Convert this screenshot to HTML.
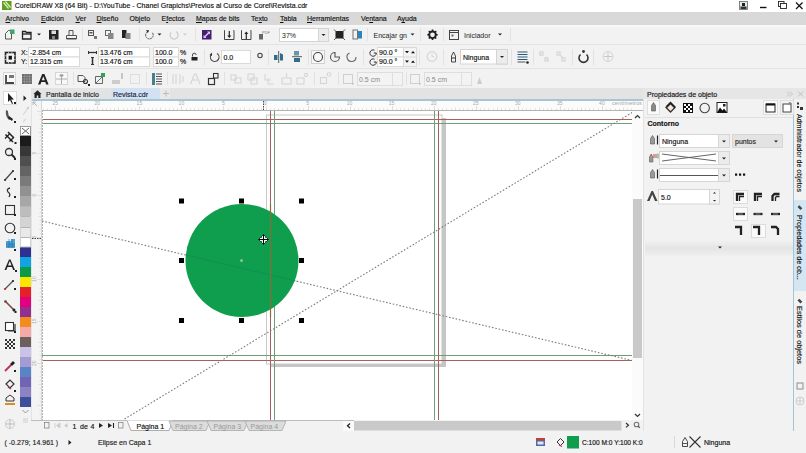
<!DOCTYPE html>
<html><head><meta charset="utf-8">
<style>
*{margin:0;padding:0;box-sizing:border-box}
html,body{width:806px;height:453px;overflow:hidden;background:#f2f2f2;font-family:"Liberation Sans",sans-serif;font-size:7px;color:#222}
.a{position:absolute}
u{text-decoration-thickness:0.6px;text-underline-offset:1px}
.t{position:absolute;white-space:nowrap;line-height:1;-webkit-text-stroke:0.15px currentColor}
.dk text{stroke:#111;stroke-width:0.15px}
.dk .lt text,.dk text.lt{stroke:none}
svg{position:absolute;overflow:visible}
</style></head><body>
<!-- title bar -->
<div class="a" style="left:0;top:0;width:806px;height:12px;background:#fff"></div>
<div class="t" style="left:14.8px;top:2.3px;color:#111">CorelDRAW X8 (64 Bit) - D:\YouTube - Chanel Grapichs\Previos al Curso de Corel\Revista.cdr</div>
<!-- menu bar -->
<div class="a" style="left:0;top:12px;width:806px;height:13px;background:#d9d9d9"></div>
<div class="t" style="left:5.5px;top:15px;color:#111"><u>A</u>rchivo</div>
<div class="t" style="left:41px;top:15px;color:#111"><u>E</u>dición</div>
<div class="t" style="left:75.5px;top:15px;color:#111"><u>V</u>er</div>
<div class="t" style="left:96.5px;top:15px;color:#111"><u>D</u>iseño</div>
<div class="t" style="left:129.5px;top:15px;color:#111">Objeto</div>
<div class="t" style="left:161.5px;top:15px;color:#111">E<u>f</u>ectos</div>
<div class="t" style="left:196px;top:15px;color:#111"><u>M</u>apas de bits</div>
<div class="t" style="left:251px;top:15px;color:#111">Te<u>x</u>to</div>
<div class="t" style="left:280px;top:15px;color:#111"><u>T</u>abla</div>
<div class="t" style="left:307px;top:15px;color:#111"><u>H</u>erramientas</div>
<div class="t" style="left:361px;top:15px;color:#111">Ve<u>n</u>tana</div>
<div class="t" style="left:397px;top:15px;color:#111">A<u>y</u>uda</div>
<!-- toolbar separators -->
<div class="a" style="left:0;top:25px;width:806px;height:2px;background:#f7f7f7"></div>
<div class="a" style="left:0;top:44px;width:806px;height:1px;background:#e3e3e3"></div>
<div class="a" style="left:0;top:68px;width:806px;height:1px;background:#e3e3e3"></div>
<!-- tab row -->
<div class="a" style="left:31px;top:88px;width:612px;height:11px;background:#e3e3e3"></div>
<div class="a" style="left:31px;top:99px;width:612px;height:2px;background:#a8c6d2"></div>
<!-- rulers -->
<div class="a" style="left:31px;top:101px;width:612px;height:10px;background:#fbfbfb;border-bottom:1px solid #b4b4b4"></div>
<div class="a" style="left:31px;top:101px;width:11px;height:319px;background:#f4f4f4;border-right:1px solid #d6d6d6"></div>
<!-- canvas -->
<div class="a" style="left:42px;top:111px;width:590px;height:309px;background:#fff"></div>
<svg class="a" style="left:0;top:0" width="806" height="453" viewBox="0 0 806 453">
<defs><clipPath id="cv"><rect x="42" y="111" width="590" height="309"/></clipPath></defs>
<g clip-path="url(#cv)">
<!-- page shadow -->
<rect x="442" y="118" width="4" height="249" fill="#c6c6c6"/>
<rect x="270" y="364" width="176" height="3" fill="#c6c6c6"/>
<!-- page border -->
<rect x="266.5" y="115" width="175.5" height="249" fill="none" stroke="#c8c8c8" stroke-width="1"/>
<!-- bleed/guide lines -->
<line x1="42" y1="119.5" x2="632" y2="119.5" stroke="#a8605e" stroke-width="1"/>
<line x1="42" y1="123.5" x2="632" y2="123.5" stroke="#6f9e78" stroke-width="1"/>
<line x1="42" y1="355.5" x2="632" y2="355.5" stroke="#6f9e78" stroke-width="1"/>
<line x1="42" y1="360.5" x2="632" y2="360.5" stroke="#a8605e" stroke-width="1"/>
<line x1="270.5" y1="110" x2="270.5" y2="420" stroke="#a8605e" stroke-width="1"/>
<line x1="274.5" y1="110" x2="274.5" y2="420" stroke="#6f9e78" stroke-width="1"/>
<line x1="434.5" y1="110" x2="434.5" y2="420" stroke="#6f9e78" stroke-width="1"/>
<line x1="438.5" y1="110" x2="438.5" y2="420" stroke="#a8605e" stroke-width="1"/>
<!-- left page edge dashed -->
<line x1="42.5" y1="110" x2="42.5" y2="420" stroke="#b4b4b4" stroke-width="1" stroke-dasharray="2 1"/>
<!-- dashed diagonals -->
<line x1="42" y1="221" x2="632" y2="360.5" stroke="#7c7c7c" stroke-width="1.1" stroke-dasharray="1.6 1.8"/>
<line x1="124.5" y1="419" x2="632" y2="112.5" stroke="#7c7c7c" stroke-width="1.1" stroke-dasharray="1.6 1.8"/>
<!-- circle -->
<circle cx="242" cy="260.5" r="56.5" fill="#0e9e4d"/>
<line x1="186" y1="255" x2="298" y2="281.5" stroke="#1c6f6a" stroke-width="1" opacity="0.3"/>

<!-- vertical lines through circle -->
<line x1="270.5" y1="204" x2="270.5" y2="317" stroke="#8c6a3c" stroke-width="1.2"/>
<!-- handles -->
<g fill="#000">
<rect x="179" y="198.5" width="5" height="5"/><rect x="239" y="198.5" width="5" height="5"/><rect x="299" y="198.5" width="5" height="5"/>
<rect x="179" y="258" width="5" height="5"/><rect x="299" y="258" width="5" height="5"/>
<rect x="179" y="318" width="5" height="5"/><rect x="239" y="318" width="5" height="5"/><rect x="299" y="318" width="5" height="5"/>
</g>
<circle cx="241.5" cy="260.5" r="1.5" fill="#8fbf9f"/>
<!-- cursor -->
<g stroke="#000" stroke-width="1.1"><path d="M259 239.5h9M263.5 235v9" stroke="#fff" stroke-width="3"/><path d="M259 239.5h9M263.5 235v9"/><path d="M261.5 236.5l2-2l2 2M261.5 242.5l2 2l2-2M260.5 237.5l-2 2l2 2M266.5 237.5l2 2l-2 2" fill="none" stroke-width="0.8"/></g>
</g>
</svg>
<!-- v scrollbar -->
<div class="a" style="left:632px;top:111px;width:11px;height:320px;background:#fbfbfb"></div>

<div class="a" style="left:633px;top:199px;width:9px;height:159px;background:#c9c9c9"></div>
<!-- page row -->
<!-- palette -->
<div class="a" style="left:19px;top:88px;width:12px;height:332px;background:#f2f2f2"></div>
<div class="a" style="left:20px;top:126px;width:11px;height:10px;background:#fff;border:1px solid #9a9a9a"></div>
<svg style="left:20px;top:126px" width="11" height="10"><path d="M2 2L9 8M9 2L2 8" stroke="#666" stroke-width="1"/></svg>
<div class="a" style="left:20px;top:136px;width:11px;height:10px;background:#1b1b1b"></div>
<div class="a" style="left:20px;top:146px;width:11px;height:10px;background:#373737"></div>
<div class="a" style="left:20px;top:156px;width:11px;height:10px;background:#4f4f4f"></div>
<div class="a" style="left:20px;top:166px;width:11px;height:10px;background:#646464"></div>
<div class="a" style="left:20px;top:176px;width:11px;height:10px;background:#7a7a7a"></div>
<div class="a" style="left:20px;top:186px;width:11px;height:10px;background:#919191"></div>
<div class="a" style="left:20px;top:196px;width:11px;height:10px;background:#a7a7a7"></div>
<div class="a" style="left:20px;top:206px;width:11px;height:10px;background:#bdbdbd"></div>
<div class="a" style="left:20px;top:216px;width:11px;height:11px;background:#d4d4d4"></div>
<div class="a" style="left:20px;top:227px;width:11px;height:10px;background:#e9e9e9"></div>
<div class="a" style="left:20px;top:237px;width:11px;height:10px;background:#ffffff"></div>
<div class="a" style="left:20px;top:247px;width:11px;height:10px;background:#2d3192"></div>
<div class="a" style="left:20px;top:257px;width:11px;height:10px;background:#12a4e0"></div>
<div class="a" style="left:20px;top:267px;width:11px;height:10px;background:#0a9a48"></div>
<div class="a" style="left:20px;top:277px;width:11px;height:10px;background:#fbe600"></div>
<div class="a" style="left:20px;top:287px;width:11px;height:10px;background:#e4202a"></div>
<div class="a" style="left:20px;top:297px;width:11px;height:10px;background:#e3007d"></div>
<div class="a" style="left:20px;top:307px;width:11px;height:10px;background:#93308e"></div>
<div class="a" style="left:20px;top:317px;width:11px;height:10px;background:#f28c1e"></div>
<div class="a" style="left:20px;top:327px;width:11px;height:10px;background:#f5aaa9"></div>
<div class="a" style="left:20px;top:337px;width:11px;height:10px;background:#6e5f5f"></div>
<div class="a" style="left:20px;top:347px;width:11px;height:10px;background:#c9c4e7"></div>
<div class="a" style="left:20px;top:357px;width:11px;height:10px;background:#a59bd3"></div>
<div class="a" style="left:20px;top:367px;width:11px;height:10px;background:#5a83c8"></div>
<div class="a" style="left:20px;top:377px;width:11px;height:10px;background:#6f65b3"></div>
<div class="a" style="left:20px;top:387px;width:11px;height:10px;background:#8b83c4"></div>
<div class="a" style="left:20px;top:397px;width:11px;height:10px;background:#3f4e9c"></div>
<svg style="left:20px;top:196px" width="11" height="52" viewBox="20 196 11 52"><path d="M20 206.5h11M20 216.5h11M20 227.5h11M20 237.5h11M20 247h11" stroke="#b5b5b5" stroke-width="1"/><path d="M20.5 216v31M30.5 216v31" stroke="#d0d0d0"/></svg>
<svg style="left:20px;top:407px" width="11" height="20"><path d="M2.5 3L5.5 6L8.5 3" stroke="#999" fill="none" stroke-width="1"/><rect x="3" y="11" width="5" height="5" fill="#e0e0e0"/></svg>
<!-- right panel -->
<div class="a" style="left:643px;top:88px;width:163px;height:11px;background:#e6e6e6"></div>
<div class="t" style="left:647px;top:91px;font-size:7px;color:#111">Propiedades de objeto</div>
<div class="a" style="left:793px;top:99px;width:1px;height:332px;background:#9fc6dc"></div>
<!-- toolbox -->
<div class="a" style="left:0;top:88px;width:19px;height:343px;background:#f2f2f2"></div>
<div class="a" style="left:3px;top:91px;width:14px;height:14px;background:#fff;border:1px solid #dcdcdc"></div>
<svg style="left:0;top:88px" width="19" height="343" viewBox="0 88 19 343">
<g fill="#222" stroke="none">
<!-- pick -->
<path d="M8 93L8 102L10 100L12 104L13 103.5L11.2 99.5L14 99.5Z"/>
<path d="M14 102h2v2h-2z"/>
<!-- shape -->
<path d="M6 110Q5 116 9 120L11 119Q8 116 8 111Z" fill="#555"/><path d="M9 116l4 3l-1 2l-4-3z"/><path d="M14 121h2v2h-2z"/>
<!-- crop -->
<path d="M5.5 134.5l7.5 7.5M8 132l6 6" stroke="#222" stroke-width="1.5" fill="none"/><path d="M5 138.5l4.5-4.5M9.5 141.5l4-4" stroke="#222" stroke-width="1.3" fill="none"/><path d="M14.5 142h2v2h-2z"/>
<!-- zoom -->
<circle cx="9" cy="152" r="3.5" fill="none" stroke="#333" stroke-width="1.3"/><path d="M11.5 154.5l3.5 3.5" stroke="#222" stroke-width="1.8"/><path d="M14 158h2v2h-2z"/>
<!-- freehand -->
<path d="M5 180L13 171" stroke="#444" stroke-width="1.2"/><circle cx="5" cy="180" r="1"/><circle cx="13" cy="171" r="1"/><path d="M14 178h2v2h-2z"/>
<!-- bezier -->
<path d="M10 188q-4 1 -2 4q3 2 1 5" stroke="#333" stroke-width="1.3" fill="none"/><path d="M14 196h2v2h-2z"/>
<!-- rect -->
<rect x="5.5" y="205.5" width="9" height="9" fill="none" stroke="#333" stroke-width="1.1"/><path d="M14 214h2v2h-2z"/>
<!-- ellipse -->
<circle cx="10" cy="228" r="4.8" fill="none" stroke="#333" stroke-width="1.1"/><path d="M14 232h2v2h-2z"/>
<!-- polygon/grid -->
<path d="M6 241h5v-2h4v9h-9z" fill="#4da3d6"/><path d="M6 244h9M6 246h9M9 239v9M12 239v9" stroke="#1d6f9f" stroke-width="0.6"/><path d="M14 249h2v2h-2z"/>
<!-- text -->
<path d="M4.5 270L9 259.5h1.5L15 270h-1.8l-1.2-3h-4.5l-1.2 3zM8 265.5h3.5L9.8 261z"/><path d="M15 270h2v2h-2z"/>
<!-- line -->
<path d="M5 289L13 281" stroke="#555" stroke-width="1.2"/><circle cx="5" cy="289" r="1.1" fill="#b23"/><circle cx="13" cy="281" r="1.1"/><path d="M14 288h2v2h-2z"/>
<!-- connector -->
<path d="M6 302L14 310" stroke="#7a4a3a" stroke-width="1.6"/><circle cx="5.5" cy="301.5" r="1.3" fill="#6a3a2a"/><circle cx="14" cy="310" r="1.5"/><path d="M14.5 311h2v2h-2z"/>
<!-- shadow -->
<rect x="5.5" y="322.5" width="8" height="8" fill="#fff" stroke="#333" stroke-width="1.1"/><path d="M8 331h7v-7" stroke="#333" stroke-width="1.2" fill="none"/><path d="M14 331h2v2h-2z"/>
<!-- transparency -->
<g fill="#333"><rect x="5" y="339" width="2" height="2"/><rect x="9" y="339" width="2" height="2"/><rect x="13" y="339" width="2" height="2"/><rect x="7" y="341" width="2" height="2"/><rect x="11" y="341" width="2" height="2"/><rect x="5" y="343" width="2" height="2"/><rect x="9" y="343" width="2" height="2"/><rect x="13" y="343" width="2" height="2"/><rect x="7" y="345" width="2" height="2"/><rect x="11" y="345" width="2" height="2"/><rect x="5" y="347" width="2" height="2"/><rect x="9" y="347" width="2" height="2"/><rect x="13" y="347" width="2" height="2"/></g>
<!-- eyedropper -->
<path d="M5 371l6-6" stroke="#c0306a" stroke-width="2"/><path d="M10 364l3-3l2 2l-3 3z"/><path d="M14 370h2v2h-2z"/>
<!-- fill -->
<path d="M6 384l4-4l4 4l-4 4z" fill="none" stroke="#333" stroke-width="1.2"/><path d="M8 387l3 2" stroke="#c0306a" stroke-width="1.5"/><path d="M14 390h2v2h-2z"/>
<!-- smart fill -->
<path d="M6 398l4-3l4 3v3h-8z" fill="none" stroke="#333" stroke-width="1"/><rect x="5" y="403" width="10" height="2" fill="#e08a2a"/>
<!-- plus -->
<path d="M10 419v10M5 424h10" stroke="#bbb" stroke-width="1"/><circle cx="10" cy="424" r="4.5" fill="none" stroke="#ccc"/>
</g>
</svg>
<!-- flyout arrows next to toolbox -->
<svg style="left:22px;top:95px" width="5" height="6"><path d="M1.5 0.5L4.5 3.2L1.5 6Z" fill="#222"/></svg>
<svg style="left:20px;top:104px" width="11" height="22"><path d="M3 11L8 4M3 18l3-3" stroke="#d8d8d8" stroke-width="1.2"/><circle cx="8" cy="4" r="1.3" fill="#d0d0d0"/></svg>
<div class="a" style="left:31px;top:88px;width:1px;height:343px;background:#e3e3e3"></div>
<!-- toolbar 1 -->
<svg style="left:0;top:24px" width="806" height="22" viewBox="0 24 806 22">
<g stroke="#e2e2e2" stroke-width="1"><path d="M82.5 28v13M139.5 28v13M195.5 28v13M367.5 28v13M420.5 28v13M443.5 28v13M510.5 28v13"/></g>
<!-- new -->
<path d="M5.5 33.5l3-3h3v8.5h-6z" fill="none" stroke="#555" stroke-width="1"/><rect x="10" y="29.5" width="4.5" height="4.5" fill="#3aa86b"/>
<!-- open -->
<path d="M22.5 31.5h3l1 1h4.5v6.5h-8.5z" fill="none" stroke="#222" stroke-width="1.3"/><path d="M22.5 34h8.5" stroke="#222" stroke-width="1.3"/>
<path d="M37 33.5h4l-2 2z" fill="#222"/>
<!-- save -->
<rect x="49" y="30" width="9.5" height="9.5" fill="#222"/><rect x="51.5" y="30.5" width="4.5" height="3.5" fill="#ddd"/><rect x="52" y="36" width="3" height="3" fill="#888"/>
<!-- print -->
<path d="M69 35v-4.5h4v4.5" fill="none" stroke="#555" stroke-width="1"/><path d="M66.5 35.5h10v3.5h-10z" fill="none" stroke="#555" stroke-width="1"/><path d="M67 38.5h9" stroke="#444" stroke-width="1"/>
<!-- three doc icons -->
<rect x="88.5" y="30.5" width="5" height="5" fill="none" stroke="#555"/><rect x="89.5" y="32" width="3" height="1.5" fill="#555"/><rect x="94" y="36" width="3" height="3" fill="#777"/>
<rect x="105.5" y="30.5" width="5" height="5" fill="none" stroke="#666"/><rect x="108" y="33" width="5.5" height="6" fill="#888"/>
<rect x="122" y="30" width="4.5" height="8" fill="#222"/><rect x="125.5" y="33" width="5" height="6" fill="#888"/>
<!-- undo -->
<path d="M147.5 31.8a3.8 3.8 0 1 0 4.5 0.5" fill="none" stroke="#555" stroke-width="1" stroke-dasharray="2 0.6"/><path d="M146 30.2h3.2l-1.4 2.8z" fill="#222"/>
<path d="M157.5 33.5h4l-2 2z" fill="#222"/>
<path d="M176 31.5a4 4 0 1 1 -5 1" fill="none" stroke="#ccc" stroke-width="1.2"/><path d="M183 33.5h4l-2 2z" fill="#ccc"/>
<!-- purple -->
<rect x="202" y="30" width="9.5" height="9.5" fill="#44206e"/><path d="M204.5 37l4.5-4.5" stroke="#e0c8ff" stroke-width="1.4"/><path d="M203.5 38v-3l3 3zM210 31.5v3l-3-3z" fill="#e0c8ff"/>
<!-- import/export -->
<path d="M225 30.5h-0.5v9h9.5v-9h-0.5" fill="none" stroke="#444" stroke-width="1"/><path d="M229.3 31v6" stroke="#222" stroke-width="1.2"/><path d="M227.3 35.5h4l-2 2.5z" fill="#222"/>
<path d="M242 30.5h-0.5v9h9.5v-9h-0.5" fill="none" stroke="#444" stroke-width="1"/><path d="M246.3 33v6" stroke="#222" stroke-width="1.2"/><path d="M244.3 34l2-2.5l2 2.5z" fill="#222"/>
<!-- pdf -->
<rect x="259" y="34" width="4" height="5.5" fill="#666"/><text x="262" y="34" font-size="4" fill="#777" font-family="Liberation Sans">PDF</text>
<!-- zoom dropdown -->
<rect x="279.5" y="28.5" width="49" height="13" fill="#fff" stroke="#d4d4d4"/><rect x="318.5" y="28.5" width="10" height="13" fill="#ececec" stroke="#d4d4d4"/><path d="M321.5 34h4l-2 2z" fill="#222"/>
<text x="282" y="37.5" font-size="7" fill="#222" font-family="Liberation Sans">37%</text>
<!-- full screen -->
<rect x="335.5" y="31" width="8" height="7.5" fill="#222"/><path d="M334 29.5l2 2M345 29.5l-2 2M334 40l2-2M345 40l-2-2" stroke="#555" stroke-width="1"/>
<!-- blue icon -->
<rect x="353" y="30" width="4.5" height="9" fill="none" stroke="#666" stroke-width="0.9"/><rect x="358" y="31" width="4" height="7.5" fill="#2b86c0"/>
<text x="373.5" y="37.5" font-size="7" fill="#222" font-family="Liberation Sans">Encajar gn</text>
<path d="M410.5 33.5h4l-2 2z" fill="#222"/>
<!-- gear -->
<circle cx="432.5" cy="34.8" r="3.3" fill="none" stroke="#222" stroke-width="1.9"/>
<g stroke="#222" stroke-width="1.6"><path d="M432.5 29.5v2M432.5 38v2M427.3 34.8h2M435.7 34.8h2M428.8 31.1l1.4 1.4M434.8 37.1l1.4 1.4M428.8 38.5l1.4-1.4M434.8 32.5l1.4-1.4"/></g>
<!-- iniciador -->
<rect x="449.5" y="30.5" width="9" height="9" fill="none" stroke="#444" stroke-width="1"/><path d="M449.5 32.5h9" stroke="#444"/><path d="M451.5 34.5h2v2h-2z" fill="#666"/>
<text x="464" y="37.5" font-size="7" fill="#222" font-family="Liberation Sans">Iniciador</text>
<path d="M498 33.5h4l-2 2z" fill="#222"/>
</svg>
<!-- property bar -->
<svg style="left:0;top:46px" width="806" height="42" viewBox="0 46 806 42">
<g class="dk" font-family="Liberation Sans" font-size="7" fill="#111">
<g stroke="#e2e2e2" stroke-width="1"><path d="M204.5 49v16M268.5 49v16M308.5 49v16M363.5 49v16M419.5 49v16M443.5 49v16M511.5 49v16M533.5 49v16M572.5 49v16M593.5 49v16"/></g>
<!-- origin icon -->
<rect x="5.5" y="52.5" width="9.5" height="10.5" fill="none" stroke="#222" stroke-width="1.6"/><rect x="8.6" y="55.8" width="3.3" height="3.8" fill="#111"/><path d="M5 55.8h1.5M5 59.6h1.5M14 55.8h1.5M14 59.6h1.5M8.6 52v1.5M11.9 52v1.5M8.6 62v1.5M11.9 62v1.5" stroke="#f2f2f2" stroke-width="0.7"/>
<text x="21" y="55">X:</text><text x="21" y="64">Y:</text>
<rect x="28.5" y="47.5" width="51" height="9.5" fill="#fff" stroke="#d9d9d9"/><rect x="28.5" y="57" width="51" height="9.5" fill="#fff" stroke="#d9d9d9"/>
<text x="30" y="55">-2.854 cm</text><text x="30" y="64.3">12.315 cm</text>
<path d="M88.5 52.5h8" stroke="#333" stroke-width="1.3"/><path d="M88.5 51v3M96.5 51v3" stroke="#333"/>
<path d="M92.5 57.5v7" stroke="#333" stroke-width="1.5"/><path d="M91 57.5h3M91 64.5h3" stroke="#333"/>
<rect x="98.5" y="47.5" width="51" height="9.5" fill="#fff" stroke="#d9d9d9"/><rect x="98.5" y="57" width="51" height="9.5" fill="#fff" stroke="#d9d9d9"/>
<text x="100" y="55">13.476 cm</text><text x="100" y="64.3">13.476 cm</text>
<rect x="153.5" y="47.5" width="25" height="9.5" fill="#fff" stroke="#d9d9d9"/><rect x="153.5" y="57" width="25" height="9.5" fill="#fff" stroke="#d9d9d9"/>
<text x="155" y="55">100.0</text><text x="155" y="64.3">100.0</text>
<text x="180" y="55">%</text><text x="180" y="64.3">%</text>
<path d="M192.5 56.5v-1.5a1.8 1.8 0 0 1 3.6 0" fill="none" stroke="#333" stroke-width="0.9"/><rect x="191.5" y="57" width="6" height="3.5" fill="#222"/>
<!-- rotate -->
<path d="M217 53.5a4.3 4.3 0 1 1 -6 1.5" fill="none" stroke="#444" stroke-width="1.1"/><path d="M209.5 55l2.5-2.5v3.5z" fill="#333"/>
<rect x="221.5" y="50.5" width="29" height="13" fill="#fff" stroke="#d9d9d9"/><text x="223.5" y="59.5">0.0</text>
<circle cx="260" cy="55.5" r="2.2" fill="none" stroke="#444" stroke-width="1.1"/>
<!-- mirror -->
<path d="M274 55h3.5v5h-3.5z" fill="#2e6e8a"/><path d="M280 53l3 1.5v6h-3z" fill="#2e6e8a"/><path d="M278.7 51v12" stroke="#333" stroke-width="0.8"/>
<path d="M292 56.7h10" stroke="#333" stroke-width="0.8"/><path d="M294 51h5v4.5h-5z" fill="#2e6e8a" opacity="0.7"/><path d="M294 58h6v4h-6z" fill="#2e6e8a"/>
<!-- ellipse / pie / arc -->
<rect x="311.5" y="50.5" width="13" height="13" fill="#f8f8f8" stroke="#d0d0d0"/><circle cx="318" cy="57" r="4.5" fill="none" stroke="#444" stroke-width="1.1"/>
<path d="M335 52.5a4.5 4.5 0 1 0 4.5 4.5h-4.5z" fill="none" stroke="#555" stroke-width="1.1"/>
<path d="M349.5 53a4.5 4.5 0 1 0 6.5 4" fill="none" stroke="#666" stroke-width="1.1"/>
<!-- angle fields -->
<path d="M374.5 50.2a3.2 3.2 0 1 0 1.8 2.8h-2.5" fill="none" stroke="#333" stroke-width="1"/><path d="M374.5 59.2a3.2 3.2 0 1 0 1.8 2.8h-2.5" fill="none" stroke="#333" stroke-width="1"/>
<rect x="377.5" y="47.5" width="39" height="9.5" fill="#fff" stroke="#d9d9d9"/><rect x="377.5" y="57" width="39" height="9.5" fill="#fff" stroke="#d9d9d9"/>
<rect x="403.5" y="47.5" width="13" height="19" fill="#f3f3f3" stroke="#d9d9d9"/><path d="M403.5 57h13" stroke="#d9d9d9"/>
<path d="M405 51h4l-2 2.2zM411 53.2h4l-2-2.2zM405 60.5h4l-2 2.2zM411 62.7h4l-2-2.2z" fill="#111"/>
<text x="379" y="55">90.0 °</text><text x="379" y="64.3">90.0 °</text>
<circle cx="432" cy="56.5" r="4.8" fill="none" stroke="#d6d6d6" stroke-width="1.2"/><path d="M432 53.5v3h2" stroke="#d6d6d6" fill="none"/>
<!-- outline pen -->
<path d="M451.5 62v-6l2-4l2 4v6z" fill="none" stroke="#333" stroke-width="0.9"/><path d="M452 58h3" stroke="#333"/>
<rect x="460.5" y="49.5" width="47" height="14.5" fill="#fff" stroke="#d4d4d4"/><rect x="496.5" y="49.5" width="11" height="14.5" fill="#ececec" stroke="#d4d4d4"/><path d="M500 56h4l-2 2z" fill="#222"/>
<text x="463" y="59.5">Ninguna</text>
<path d="M517.5 52h10M517.5 54.5h10M517.5 57h10M517.5 59.5h10" stroke="#2a5a78" stroke-width="1.2"/><path d="M517.5 62h8" stroke="#555" stroke-width="1"/><circle cx="527.5" cy="62.5" r="1.3" fill="#222"/>
<g stroke="#dadada" stroke-width="1.5" fill="none"><path d="M539 53l3 3M545 57l3 3"/><rect x="540" y="52" width="3" height="3"/><rect x="545" y="58" width="3" height="3"/><rect x="557" y="52" width="3" height="3"/><rect x="562" y="58" width="3" height="3"/><path d="M559 54l4 4"/></g>
<path d="M586.5 54.5a4.5 4.5 0 1 1 -6 0" fill="none" stroke="#333" stroke-width="1.6"/><circle cx="583.5" cy="51.5" r="1.4" fill="#333"/>
<circle cx="608" cy="56.5" r="5" fill="none" stroke="#d2d2d2" stroke-width="1"/><path d="M608 52.5v8M604 56.5h8" stroke="#c8c8c8" stroke-width="1"/>
</g>
<!-- row 3 -->
<g stroke="#e2e2e2" stroke-width="1"><path d="M73.5 72v13M146.5 72v13M167.5 72v13M224.5 72v13M314.5 72v13M338.5 72v13M406.5 72v13"/></g>
<rect x="3.5" y="72.5" width="12" height="12" fill="#f8f8f8" stroke="#d6d6d6"/><path d="M6 75v8h8" fill="none" stroke="#444" stroke-width="1.8"/><rect x="9" y="75" width="5" height="3" fill="#777"/>
<rect x="22" y="74" width="10" height="10" fill="#6f6f6f"/><path d="M22 76.5h10M22 79h10M22 81.5h10M24.5 74v10M27 74v10M29.5 74v10" stroke="#9a9a9a" stroke-width="0.6"/>
<path d="M38 84.5l4.2-10.5h2.2l4.2 10.5h-2.4l-0.9-2.4h-4l-0.9 2.4zM41.8 80.2h3l-1.5-4z" fill="#222"/>
<rect x="55.5" y="72.5" width="12" height="12" fill="#f8f8f8" stroke="#d6d6d6"/><path d="M56 79h11M61.5 77v7" stroke="#999" stroke-width="0.8"/><ellipse cx="61.5" cy="75.5" rx="2" ry="1.3" fill="#999"/>
<path d="M78 75.5h5l2 2v4h-7z" fill="none" stroke="#444" stroke-width="0.9"/><circle cx="85.5" cy="81.5" r="2" fill="none" stroke="#333" stroke-width="1.1"/><rect x="88" y="84" width="2" height="2" fill="#222"/>
<path d="M95.5 76.5h7v7h-7z" fill="none" stroke="#555" stroke-width="0.9"/><path d="M96 83l6-6" stroke="#555" stroke-width="0.9"/><rect x="101" y="73" width="4" height="4" fill="#2ea84f"/>
<rect x="112" y="80" width="8" height="4" fill="#ccc"/><path d="M122 73v6" stroke="#999"/>
<rect x="130.5" y="74.5" width="9" height="9" fill="none" stroke="#ddd" stroke-width="1"/>
<g fill="#3a6f88"><rect x="152" y="73" width="3" height="12" fill="#44808f"/><path d="M156 74h6M156 76.5h6M156 79h6M156 81.5h6M156 84h6" stroke="#555" stroke-width="1.1"/></g>
<g stroke="#d4d4d4" stroke-width="1.1" fill="none"><path d="M173 74v10M176 74v10M180 74v10M183 76v6"/><path d="M190.5 84l4-10h1.5l4 10" /><path d="M192.5 80h5"/></g>
<rect x="208.5" y="78.5" width="6" height="6" fill="none" stroke="#333" stroke-width="1.2"/><rect x="213.5" y="73.5" width="4.5" height="4.5" fill="none" stroke="#333" stroke-width="1.1"/>
<g stroke="#d6d6d6" stroke-width="1.1" fill="none"><rect x="231" y="75" width="5" height="5"/><rect x="235" y="78" width="6" height="5"/><rect x="248" y="74" width="6" height="6"/><rect x="251" y="78" width="6" height="6"/><path d="M265 74v6h6M268 78v6h6"/><rect x="282" y="78" width="9" height="6"/><path d="M286.5 73v4"/><rect x="297" y="78" width="7" height="6"/><circle cx="306" cy="75" r="1.6"/><rect x="320.5" y="77.5" width="6" height="6"/><circle cx="329" cy="74.5" r="1.8"/></g>
<rect x="343.5" y="74.5" width="9" height="9" fill="none" stroke="#cfcfcf" stroke-width="1"/><rect x="352" y="83" width="1.5" height="1.5" fill="#bbb"/>
<rect x="357.5" y="72.5" width="45" height="13" fill="#f3f3f3" stroke="#dedede"/><path d="M392.5 72.5v13" stroke="#dedede"/><text class="lt" x="359" y="81.5" fill="#8a8a8a">0.5 cm</text>
<rect x="410.5" y="74.5" width="9" height="9" fill="none" stroke="#cfcfcf" stroke-width="1"/><rect x="419" y="83" width="1.5" height="1.5" fill="#bbb"/>
<rect x="424.5" y="72.5" width="47" height="13" fill="#f3f3f3" stroke="#dedede"/><path d="M461.5 72.5v13" stroke="#dedede"/><text class="lt" x="426" y="81.5" fill="#8a8a8a">0.5 cm</text>
<path d="M477 84l2.5-7l2.5 7z" fill="#ccc"/>
</g>
</svg>
<!-- tabs -->
<svg style="left:33px;top:90px" width="9" height="8"><path d="M0.5 4L4.5 0.3L8.5 4H7.5V8H5.3V5.5H3.7V8H1.5V4Z" fill="#222"/></svg>
<div class="t" style="left:46px;top:90.5px;color:#222">Pantalla de inicio</div>
<div class="a" style="left:111px;top:88px;width:49px;height:11px;background:#d3e2f3"></div>
<div class="t" style="left:113px;top:90.5px;color:#1a2440">Revista.cdr</div>
<div class="a" style="left:160px;top:88px;width:10px;height:11px;background:#e9e9e9"></div>
<svg style="left:161px;top:88px" width="10" height="11"><path d="M5 2.5v6M2 5.5h6" stroke="#bbb" stroke-width="1"/></svg>
<svg style="left:0;top:0" width="806" height="453" viewBox="0 0 806 453">
<g font-family="Liberation Sans" font-size="5" fill="#a8a8a8"><text x="55.2" y="105" text-anchor="middle">25</text><text x="97.3" y="105" text-anchor="middle">20</text><text x="139.4" y="105" text-anchor="middle">15</text><text x="181.4" y="105" text-anchor="middle">10</text><text x="223.4" y="105" text-anchor="middle">5</text><text x="265.5" y="105" text-anchor="middle">0</text><text x="307.6" y="105" text-anchor="middle">5</text><text x="349.6" y="105" text-anchor="middle">10</text><text x="391.6" y="105" text-anchor="middle">15</text><text x="433.7" y="105" text-anchor="middle">20</text><text x="475.8" y="105" text-anchor="middle">25</text><text x="517.8" y="105" text-anchor="middle">30</text><text x="559.8" y="105" text-anchor="middle">35</text><text x="601.9" y="105" text-anchor="middle">40</text><text x="612" y="105" textLength="30" lengthAdjust="spacingAndGlyphs">centímetros</text><text transform="translate(35.5 153.0) rotate(-90)" text-anchor="middle">5</text><text transform="translate(35.5 195.1) rotate(-90)" text-anchor="middle">0</text><text transform="translate(35.5 237.1) rotate(-90)" text-anchor="middle">5</text><text transform="translate(35.5 279.1) rotate(-90)" text-anchor="middle">10</text><text transform="translate(35.5 321.2) rotate(-90)" text-anchor="middle">15</text><text transform="translate(35.5 363.2) rotate(-90)" text-anchor="middle">20</text></g>
<path d="M43.5 108.5v1.5M47.5 108.5v1.5M51.5 108.5v1.5M55.5 106v4M59.5 108.5v1.5M64.5 108.5v1.5M68.5 108.5v1.5M72.5 108.5v1.5M76.5 107.5v2.5M80.5 108.5v1.5M85.5 108.5v1.5M89.5 108.5v1.5M93.5 108.5v1.5M97.5 106v4M102.5 108.5v1.5M106.5 108.5v1.5M110.5 108.5v1.5M114.5 108.5v1.5M118.5 107.5v2.5M123.5 108.5v1.5M127.5 108.5v1.5M131.5 108.5v1.5M135.5 108.5v1.5M139.5 106v4M144.5 108.5v1.5M148.5 108.5v1.5M152.5 108.5v1.5M156.5 108.5v1.5M160.5 107.5v2.5M165.5 108.5v1.5M169.5 108.5v1.5M173.5 108.5v1.5M177.5 108.5v1.5M181.5 106v4M186.5 108.5v1.5M190.5 108.5v1.5M194.5 108.5v1.5M198.5 108.5v1.5M202.5 107.5v2.5M207.5 108.5v1.5M211.5 108.5v1.5M215.5 108.5v1.5M219.5 108.5v1.5M223.5 106v4M228.5 108.5v1.5M232.5 108.5v1.5M236.5 108.5v1.5M240.5 108.5v1.5M244.5 107.5v2.5M249.5 108.5v1.5M253.5 108.5v1.5M257.5 108.5v1.5M261.5 108.5v1.5M266.5 106v4M270.5 108.5v1.5M274.5 108.5v1.5M278.5 108.5v1.5M282.5 108.5v1.5M287.5 107.5v2.5M291.5 108.5v1.5M295.5 108.5v1.5M299.5 108.5v1.5M303.5 108.5v1.5M308.5 106v4M312.5 108.5v1.5M316.5 108.5v1.5M320.5 108.5v1.5M324.5 108.5v1.5M329.5 107.5v2.5M333.5 108.5v1.5M337.5 108.5v1.5M341.5 108.5v1.5M345.5 108.5v1.5M350.5 106v4M354.5 108.5v1.5M358.5 108.5v1.5M362.5 108.5v1.5M366.5 108.5v1.5M371.5 107.5v2.5M375.5 108.5v1.5M379.5 108.5v1.5M383.5 108.5v1.5M387.5 108.5v1.5M392.5 106v4M396.5 108.5v1.5M400.5 108.5v1.5M404.5 108.5v1.5M408.5 108.5v1.5M413.5 107.5v2.5M417.5 108.5v1.5M421.5 108.5v1.5M425.5 108.5v1.5M429.5 108.5v1.5M434.5 106v4M438.5 108.5v1.5M442.5 108.5v1.5M446.5 108.5v1.5M451.5 108.5v1.5M455.5 107.5v2.5M459.5 108.5v1.5M463.5 108.5v1.5M467.5 108.5v1.5M472.5 108.5v1.5M476.5 106v4M480.5 108.5v1.5M484.5 108.5v1.5M488.5 108.5v1.5M493.5 108.5v1.5M497.5 107.5v2.5M501.5 108.5v1.5M505.5 108.5v1.5M509.5 108.5v1.5M514.5 108.5v1.5M518.5 106v4M522.5 108.5v1.5M526.5 108.5v1.5M530.5 108.5v1.5M535.5 108.5v1.5M539.5 107.5v2.5M543.5 108.5v1.5M547.5 108.5v1.5M551.5 108.5v1.5M556.5 108.5v1.5M560.5 106v4M564.5 108.5v1.5M568.5 108.5v1.5M572.5 108.5v1.5M577.5 108.5v1.5M581.5 107.5v2.5M585.5 108.5v1.5M589.5 108.5v1.5M593.5 108.5v1.5M598.5 108.5v1.5M602.5 106v4M606.5 108.5v1.5M610.5 108.5v1.5M615.5 108.5v1.5M619.5 108.5v1.5M623.5 107.5v2.5M627.5 108.5v1.5M631.5 108.5v1.5" stroke="#dedede" stroke-width="1"/>
<path d="M37 111.5h4M39.5 115.5h1.5M39.5 119.5h1.5M39.5 124.5h1.5M39.5 128.5h1.5M38.5 132.5h2.5M39.5 136.5h1.5M39.5 140.5h1.5M39.5 145.5h1.5M39.5 149.5h1.5M37 153.5h4M39.5 157.5h1.5M39.5 161.5h1.5M39.5 166.5h1.5M39.5 170.5h1.5M38.5 174.5h2.5M39.5 178.5h1.5M39.5 182.5h1.5M39.5 187.5h1.5M39.5 191.5h1.5M37 195.5h4M39.5 199.5h1.5M39.5 203.5h1.5M39.5 208.5h1.5M39.5 212.5h1.5M38.5 216.5h2.5M39.5 220.5h1.5M39.5 224.5h1.5M39.5 229.5h1.5M39.5 233.5h1.5M37 237.5h4M39.5 241.5h1.5M39.5 246.5h1.5M39.5 250.5h1.5M39.5 254.5h1.5M38.5 258.5h2.5M39.5 262.5h1.5M39.5 267.5h1.5M39.5 271.5h1.5M39.5 275.5h1.5M37 279.5h4M39.5 283.5h1.5M39.5 288.5h1.5M39.5 292.5h1.5M39.5 296.5h1.5M38.5 300.5h2.5M39.5 304.5h1.5M39.5 309.5h1.5M39.5 313.5h1.5M39.5 317.5h1.5M37 321.5h4M39.5 325.5h1.5M39.5 330.5h1.5M39.5 334.5h1.5M39.5 338.5h1.5M38.5 342.5h2.5M39.5 346.5h1.5M39.5 351.5h1.5M39.5 355.5h1.5M39.5 359.5h1.5M37 363.5h4M39.5 367.5h1.5M39.5 372.5h1.5M39.5 376.5h1.5M39.5 380.5h1.5M38.5 384.5h2.5M39.5 388.5h1.5M39.5 393.5h1.5M39.5 397.5h1.5M39.5 401.5h1.5M37 405.5h4M39.5 410.5h1.5M39.5 414.5h1.5M39.5 418.5h1.5" stroke="#e0e0e0" stroke-width="1"/>
<path d="M263.5 101v9" stroke="#444" stroke-dasharray="1.5 1"/>
<path d="M32 238.5h9" stroke="#444" stroke-dasharray="1.5 1"/>
<path d="M33 102l4 4M33 102h3M33 102v3" stroke="#aaa" stroke-width="0.8" fill="none"/>
</svg>
<!-- page nav row -->
<svg style="left:0;top:420px" width="643" height="11" viewBox="0 420 643 11">
<rect x="31" y="420" width="612" height="11" fill="#f2f2f2"/>
<path d="M31 420.5h323" stroke="#bdbdbd"/>
<g class="dk" font-family="Liberation Sans" font-size="7" fill="#111">
<rect x="44.5" y="422.5" width="4.5" height="5.5" fill="none" stroke="#888" stroke-width="0.8"/>
<path d="M55 423v5M60 423l-3.5 2.5l3.5 2.5z" stroke="#ccc" fill="#ccc" stroke-width="0.8"/>
<path d="M67.5 423l-3.5 2.5l3.5 2.5z" fill="#ccc"/>
<text x="72.5" y="428.5">1</text><text x="80" y="428.5">de</text><text x="90.5" y="428.5">4</text>
<path d="M99 423l4 2.5l-4 2.5z" fill="#222"/>
<path d="M108 423l4 2.5l-4 2.5z" fill="#222"/><path d="M113.5 423v5" stroke="#222" stroke-width="1.1"/>
<rect x="118.5" y="422.5" width="4.5" height="5.5" fill="none" stroke="#888" stroke-width="0.8"/>
<path d="M127 420.5l4 10h38l4-10" fill="#ffffff" stroke="#999" stroke-width="0.8"/>
<text x="136.5" y="428.5">Página 1</text>
<g class="lt" fill="#9a9a9a" stroke-width="0"><path d="M169 421l4 9.5h33l4-9.5z" fill="#dcdcdc" stroke="#a8a8a8" stroke-width="0.8"/><text x="175" y="428.5">Página 2</text>
<path d="M207 421l4 9.5h33l4-9.5z" fill="#dcdcdc" stroke="#a8a8a8" stroke-width="0.8"/><text x="213.5" y="428.5">Página 3</text>
<path d="M245 421l4 9.5h33l4-9.5z" fill="#dcdcdc" stroke="#a8a8a8" stroke-width="0.8"/><text x="250.5" y="428.5">Página 4</text></g>
<rect x="343" y="421" width="11" height="10" fill="#fafafa"/><path d="M350 423.5l-2.5 2.2l2.5 2.2" stroke="#222" fill="none" stroke-width="1.3"/>
</g>
<rect x="354" y="421" width="267.5" height="9.5" fill="#c9c9c9"/>
<path d="M636 428l-0 0" stroke="#333"/>
</svg>
<!-- status bar -->
<svg style="left:0;top:431px" width="806" height="22" viewBox="0 431 806 22">
<g class="dk" font-family="Liberation Sans" font-size="7" fill="#111">
<path d="M68.5 440l3 2.5l-3 2.5z" fill="#222"/>
<rect x="536" y="438" width="9" height="8" fill="#4a6fa5"/><rect x="536" y="438" width="9" height="2.5" fill="#c04040"/><rect x="537.5" y="441.5" width="6" height="3" fill="#dfe8f5"/>
<path d="M557 442l3.5-3.5l3.5 3.5l-3.5 3.5z" fill="none" stroke="#333" stroke-width="1"/><path d="M559 445l3 1.5" stroke="#c03060" stroke-width="1.2"/>
<rect x="567" y="436" width="12" height="12.5" fill="#0e9e4d"/>
<text x="582" y="444.5" font-size="6.6">C:100 M:0 Y:100 K:0</text>
<path d="M674.5 436v12" stroke="#d8d8d8"/>
<path d="M682.5 446.5v-5l2.5-4l2.5 4v5z" fill="none" stroke="#333" stroke-width="0.9"/><path d="M683 443.5h4" stroke="#333" stroke-width="0.8"/>
<path d="M689.5 436.5l11 11M700.5 436.5l-11 11" stroke="#333" stroke-width="1.1"/>
<text x="704" y="444.5">Ninguna</text>
</g>
</svg>
<!-- window controls -->
<svg style="left:0;top:0" width="806" height="12" viewBox="0 0 806 12">
<rect x="739.5" y="1.5" width="8" height="8" fill="#dfeee6" stroke="#666" stroke-width="0.8"/><rect x="742" y="3" width="3" height="3" fill="#222"/><rect x="740.5" y="6.5" width="6" height="2.5" fill="#333"/>
<path d="M760 7.5h6.5" stroke="#111" stroke-width="1.4"/>
<rect x="778.5" y="1.5" width="5.5" height="5" fill="none" stroke="#222" stroke-width="0.9"/><rect x="780.5" y="3.5" width="6" height="5" fill="#fff" stroke="#222" stroke-width="0.9"/>
<path d="M796 2.5l6.5 6.5M802.5 2.5l-6.5 6.5" stroke="#111" stroke-width="1.2"/>
<!-- corel logo -->
<rect x="2" y="1" width="9.5" height="9" fill="#5f9e22"/><path d="M3.5 2.5L8.5 8.5M5.5 1.5L10.5 7.5" stroke="#d8f0b0" stroke-width="1.2"/>
</svg>
<!-- right panel content -->
<svg style="left:643px;top:88px" width="163" height="343" viewBox="643 88 163 343">
<g class="dk" font-family="Liberation Sans" font-size="7" fill="#111">
<path d="M643.5 99v332" stroke="#e2e2e2"/>
<path d="M787 91.5l2.5 2.5l-2.5 2.5M790 91.5l2.5 2.5l-2.5 2.5" stroke="#bbb" fill="none" stroke-width="0.8"/>
<path d="M798 91.5l5 5M803 91.5l-5 5" stroke="#bbb" stroke-width="0.9"/>
<rect x="647.5" y="100.5" width="12" height="14" fill="#fafafa" stroke="#dedede"/>
<path d="M651.5 111v-5.5l2-3l2 3v5.5z" fill="#888" stroke="#555" stroke-width="0.6"/>
<path d="M666 107.5l4.5-4.5l4.5 4.5l-4.5 4.5z" fill="#f4e6da" stroke="#333" stroke-width="1.3"/><path d="M666.5 107l4-4l4.5 4.5" stroke="#222" stroke-width="2" fill="none"/>
<g fill="#111"><rect x="683" y="103" width="10" height="10"/></g>
<g fill="#fff"><rect x="684" y="104" width="2" height="2"/><rect x="688" y="104" width="2" height="2"/><rect x="686" y="106" width="2" height="2"/><rect x="690" y="106" width="2" height="2"/><rect x="684" y="108" width="2" height="2"/><rect x="688" y="108" width="2" height="2"/><rect x="686" y="110" width="2" height="2"/><rect x="690" y="110" width="2" height="2"/></g>
<circle cx="704.7" cy="108" r="4.7" fill="none" stroke="#444" stroke-width="1.1"/>
<rect x="717" y="102.5" width="10" height="10" fill="#fff" stroke="#222" stroke-width="1"/><path d="M717 112.5l3-5l2.5 3l1.5-2l3 4z" fill="#111"/><rect x="723" y="104" width="2.5" height="2.5" fill="#222"/>
<rect x="763.5" y="100.5" width="14" height="14" fill="#fafafa" stroke="#dedede"/><rect x="766" y="104" width="9" height="8" fill="#fff" stroke="#222" stroke-width="1"/><path d="M766 104.5h9" stroke="#111" stroke-width="2"/>
<rect x="780.5" y="100.5" width="13" height="14" fill="#f3f3f3" stroke="#dedede"/><rect x="783" y="104" width="8" height="8" fill="#fff" stroke="#444" stroke-width="1"/><circle cx="790" cy="103.5" r="1.6" fill="#888"/>
<path d="M645 117.5h148" stroke="#e0e0e0"/>
<text x="647.5" y="126" font-weight="bold">Contorno</text>
<!-- row 1 -->
<path d="M650.5 144v-5.5l2-3l2 3v5.5z" fill="#999" stroke="#555" stroke-width="0.6"/><path d="M657.5 135.5v9" stroke="#222" stroke-width="1.2"/>
<rect x="659.5" y="134.5" width="70" height="13" fill="#fff" stroke="#d6d6d6"/><rect x="718.5" y="134.5" width="11" height="13" fill="#ececec" stroke="#d6d6d6"/><path d="M722 140.5h4l-2 2z" fill="#222"/>
<text x="662" y="144">Ninguna</text>
<rect x="732.5" y="134.5" width="50" height="13" fill="#e3e3e3" stroke="#d6d6d6"/><text x="735" y="143.5" fill="#333">puntos</text><path d="M774 140.5h4l-2 2z" fill="#222"/>
<!-- row 2 -->
<path d="M649.5 162v-5l1.7-3l1.7 3v5z" fill="#999" stroke="#555" stroke-width="0.6"/><path d="M654 154v4M656 154v4" stroke="#c03030" stroke-width="0.9"/><path d="M658 153.5v5" stroke="#3a9a5a" stroke-width="0.9"/>
<rect x="659.5" y="151.5" width="70" height="13" fill="#fff" stroke="#d6d6d6"/><rect x="718.5" y="151.5" width="11" height="13" fill="#ececec" stroke="#d6d6d6"/><path d="M722 157.5h4l-2 2z" fill="#222"/>
<path d="M662 154l54 7M662 161l54-7" stroke="#555" stroke-width="0.9"/>
<!-- row 3 -->
<path d="M650.5 178v-5.5l2-3l2 3v5.5z" fill="#999" stroke="#555" stroke-width="0.6"/><path d="M657.5 169.5v9" stroke="#222" stroke-width="1.2"/>
<rect x="659.5" y="168.5" width="70" height="13" fill="#fff" stroke="#d6d6d6"/><rect x="718.5" y="168.5" width="11" height="13" fill="#ececec" stroke="#d6d6d6"/><path d="M722 174.5h4l-2 2z" fill="#222"/>
<path d="M660 175.5h58" stroke="#555" stroke-width="1.2"/>
<g fill="#111"><rect x="735" y="173.5" width="2.2" height="2.2"/><rect x="739" y="173.5" width="2.2" height="2.2"/><rect x="743" y="173.5" width="2.2" height="2.2"/></g>
<!-- miter -->
<path d="M647 201l4.5-10h1.5l4.5 10h-2.5l-2.8-6.5l-2.7 6.5z" fill="#444"/>
<rect x="658.5" y="189.5" width="61" height="14.5" fill="#fff" stroke="#d6d6d6"/><rect x="709.5" y="189.5" width="10" height="14.5" fill="#f3f3f3" stroke="#d6d6d6"/>
<path d="M713 193.5l1.5-1.5l1.5 1.5zM713 200l1.5 1.5l1.5-1.5z" fill="#222"/>
<text x="661" y="199.5">5.0</text>
<!-- join/caps grid -->
<rect x="733.5" y="190.5" width="14" height="13" fill="#fafafa" stroke="#dcdcdc"/>
<path d="M737 201v-7h7" stroke="#222" stroke-width="2.3" fill="none"/><path d="M739.5 201v-4.5h4.5" stroke="#222" stroke-width="1.3" fill="none"/>
<path d="M755 201v-7h7" stroke="#222" stroke-width="2.3" fill="none"/><path d="M757.5 201v-4.5h4.5" stroke="#222" stroke-width="1.3" fill="none"/>
<path d="M772.5 201v-5l2-2h5" stroke="#222" stroke-width="2.3" fill="none"/><path d="M775.5 201v-3.5l1-1h3" stroke="#222" stroke-width="1.3" fill="none"/>
<rect x="733.5" y="207.5" width="14" height="13" fill="#fafafa" stroke="#dcdcdc"/>
<path d="M736 214h9" stroke="#222" stroke-width="2.3"/><path d="M753.5 214h9" stroke="#222" stroke-width="2.3"/><path d="M771 214h9" stroke="#222" stroke-width="2.3"/>
<path d="M738 214h5M755.5 214h5M773 214h5" stroke="#bbb" stroke-width="0.7"/>
<rect x="751.5" y="224.5" width="14" height="13" fill="#fafafa" stroke="#dcdcdc"/>
<path d="M735 227h6v8" stroke="#222" stroke-width="2.3" fill="none"/><path d="M753 227h6v8" stroke="#222" stroke-width="2.3" fill="none"/><path d="M771 227h5l2 2v6" stroke="#222" stroke-width="2.3" fill="none"/>
<!-- bottom band -->
<defs><linearGradient id="bb" x1="0" y1="0" x2="0" y2="1"><stop offset="0" stop-color="#f2f2f2"/><stop offset="0.5" stop-color="#e4e4e4"/><stop offset="1" stop-color="#f0f0f0"/></linearGradient></defs><rect x="645" y="240" width="148" height="16" fill="url(#bb)"/>
<path d="M718 246.5h4l-2 2z" fill="#222"/>
</g>
</svg>
<!-- far right strip -->
<svg style="left:794px;top:99px" width="12" height="332" viewBox="794 99 12 332">
<rect x="794" y="99" width="12" height="332" fill="#f2f2f2"/>
<rect x="794" y="200" width="12" height="91" fill="#d5e6f3"/>
<g class="dk" font-family="Liberation Sans" font-size="7" fill="#111">
<path d="M797 102.5h2v2h-2zM797 106h2v2h-2zM800 107h3v3h-3z" fill="#333"/>
<text transform="translate(797.2 114) rotate(90)" textLength="78" lengthAdjust="spacingAndGlyphs">Administrador de objetos</text>
<path d="M797.5 207l3 3l1.8-1.8l-3-3z" fill="#444"/>
<text transform="translate(797.2 215) rotate(90)">Propiedades de ob...</text>
<path d="M797.5 300.5l3 3l1.8-1.8l-3-3z" fill="#444"/>
<text transform="translate(797.2 306) rotate(90)" textLength="58" lengthAdjust="spacingAndGlyphs">Estilos de objetos</text>
<rect x="797" y="383" width="6" height="6" fill="none" stroke="#777" stroke-width="0.8"/>
<circle cx="800" cy="401" r="4" fill="none" stroke="#ccc"/><path d="M800 398v6M797 401h6" stroke="#ccc"/>
</g>
</svg>
<!-- status -->
<div class="t" style="left:4.5px;top:438.8px">( -0.279; 14.961 )</div>
<div class="t" style="left:98px;top:438.8px">Elipse en Capa 1</div>
<svg style="left:620px;top:110px" width="23" height="321" viewBox="620 110 23 321"><path d="M635 118l2.5-2.5l2.5 2.5" stroke="#333" stroke-width="1.2" fill="none"/><path d="M635 414l2.5 2.5l2.5-2.5" stroke="#333" stroke-width="1.2" fill="none"/><path d="M626 423l2.5 2.2l-2.5 2.2" stroke="#333" stroke-width="1.2" fill="none"/><circle cx="636.5" cy="424.5" r="2.3" fill="none" stroke="#777" stroke-width="1.1"/><path d="M638 426l1.8 1.8" stroke="#555" stroke-width="1.2"/></svg>
</body></html>
